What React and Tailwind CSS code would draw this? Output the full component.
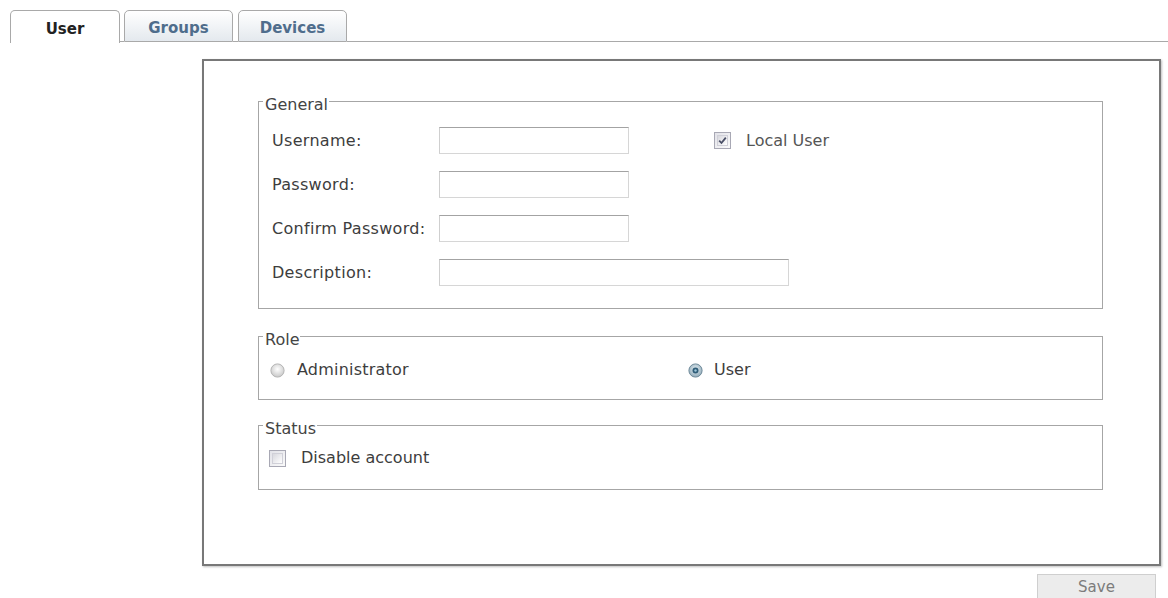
import React from "react";

const font = { fontFamily: '"DejaVu Sans", Verdana, sans-serif' };

function Tab({ label, active }) {
  if (active) {
    return (
      <div className="w-[110px] h-[33px] -mb-px rounded-t-[5px] border border-b-0 border-[#a9a9a9] bg-white flex items-center justify-center pt-[5px] text-[15px] font-bold text-[#222]">
        {label}
      </div>
    );
  }
  return (
    <div className="w-[109px] h-[32px] rounded-t-[5px] border border-[#a9a9a9] bg-gradient-to-b from-white to-[#e4e9ee] flex items-center justify-center pt-[4px] text-[15px] font-bold text-[#4f6d8c]">
      {label}
    </div>
  );
}

function Legend({ children }) {
  return (
    <legend className="ml-[4px] pl-[2px] pr-[1px] leading-[18px] text-[16px] text-[#444]">
      <span className="block translate-y-[4px]">{children}</span>
    </legend>
  );
}

function TextInput({ w }) {
  return (
    <div
      className={`h-[27px] ${w} bg-white border border-[#d6d6d6] border-t-[#a3a3a3] border-l-[#cfcfcf]`}
    />
  );
}

function Checkbox({ checked }) {
  return (
    <div className="w-[17px] h-[17px] border border-[#a8a8b4] bg-gradient-to-br from-[#e2e2e8] to-[#fafafa] flex items-center justify-center">
      <div className="w-[11px] h-[11px] border border-[#d0d0d8] bg-gradient-to-br from-[#d8d8de] to-white flex items-center justify-center">
        {checked && (
          <svg width="9" height="9" viewBox="0 0 9 9">
            <path d="M1.2 4.6 L3.5 7 L7.8 1.6" fill="none" stroke="#4a4f66" strokeWidth="1.8" />
          </svg>
        )}
      </div>
    </div>
  );
}

function Radio({ checked }) {
  return (
    <svg width="15" height="15" viewBox="0 0 15 15">
      <defs>
        <radialGradient id={checked ? "rg1" : "rg0"} cx="50%" cy="40%" r="60%">
          <stop offset="0%" stopColor={checked ? "#e6f0f4" : "#ffffff"} />
          <stop offset="100%" stopColor={checked ? "#8fa9b8" : "#c8c8c8"} />
        </radialGradient>
      </defs>
      <circle cx="7.5" cy="7.5" r="6.6" fill={`url(#${checked ? "rg1" : "rg0"})`} stroke={checked ? "#6f8a9a" : "#b5b5b5"} strokeWidth="1" />
      {checked && <circle cx="7.5" cy="7.5" r="3" fill="#2f5d78" />}
      {checked && <circle cx="7.5" cy="7.5" r="1.2" fill="#9cc4d8" />}
    </svg>
  );
}

function Row({ label, w }) {
  return (
    <div className="flex items-center h-[27px]">
      <div className="w-[167px] text-[16px] tracking-[0.3px] text-[#3d3d3d]">{label}</div>
      <TextInput w={w} />
    </div>
  );
}

export default function App() {
  return (
    <div className="w-[1168px] h-[598px] bg-white overflow-hidden" style={font}>
      {/* Tabs */}
      <div className="flex items-end h-[42px]">
        <div className="w-[10px]" />
        <Tab label="User" active />
        <div className="w-[4px] self-stretch border-b border-[#a9a9a9]" />
        <Tab label="Groups" />
        <div className="w-[5px] self-stretch border-b border-[#a9a9a9]" />
        <Tab label="Devices" />
        <div className="flex-1 self-stretch border-b border-[#a9a9a9]" />
      </div>

      {/* Panel */}
      <div className="ml-[202px] mt-[17px] w-[959px] h-[507px] border-2 border-[#787878] shadow-[1px_1px_2px_rgba(0,0,0,0.25)] pt-[31px] pl-[54px]">
        {/* General */}
        <fieldset className="w-[845px] border border-[#a6a6a6] pb-[22px]">
          <Legend>General</Legend>
          <div className="mt-[17px] pl-[13px] flex">
            <div className="flex flex-col gap-[17px]">
              <Row label="Username:" w="w-[190px]" />
              <Row label="Password:" w="w-[190px]" />
              <Row label="Confirm Password:" w="w-[190px]" />
              <Row label="Description:" w="w-[350px]" />
            </div>
            <div className="ml-[-265px] pl-[190px] h-[27px] flex items-center gap-[15px]">
              <Checkbox checked />
              <span className="text-[16px] text-[#555]">Local User</span>
            </div>
          </div>
        </fieldset>

        {/* Role */}
        <fieldset className="mt-[18px] w-[845px] border border-[#a6a6a6] pb-[19px]">
          <Legend>Role</Legend>
          <div className="mt-[15px] pl-[11px] h-[20px] flex items-center">
            <div className="w-[418px] flex items-center gap-[12px]">
              <Radio />
              <span className="text-[16px] tracking-[0.2px] text-[#3d3d3d]">Administrator</span>
            </div>
            <div className="flex items-center gap-[11px]">
              <Radio checked />
              <span className="text-[16px] text-[#3d3d3d]">User</span>
            </div>
          </div>
        </fieldset>

        {/* Status */}
        <fieldset className="mt-[16px] w-[845px] border border-[#a6a6a6] pb-[21px]">
          <Legend>Status</Legend>
          <div className="mt-[14px] pl-[10px] h-[20px] flex items-center gap-[15px]">
            <Checkbox />
            <span className="text-[16px] text-[#3d3d3d]">Disable account</span>
          </div>
        </fieldset>
      </div>

      {/* Save */}
      <div className="flex justify-end pr-[12px] mt-[8px]">
        <button className="w-[119px] h-[27px] bg-[#ececec] border border-[#cfcfcf] text-[15px] text-[#7c7c7c]">
          Save
        </button>
      </div>
    </div>
  );
}
